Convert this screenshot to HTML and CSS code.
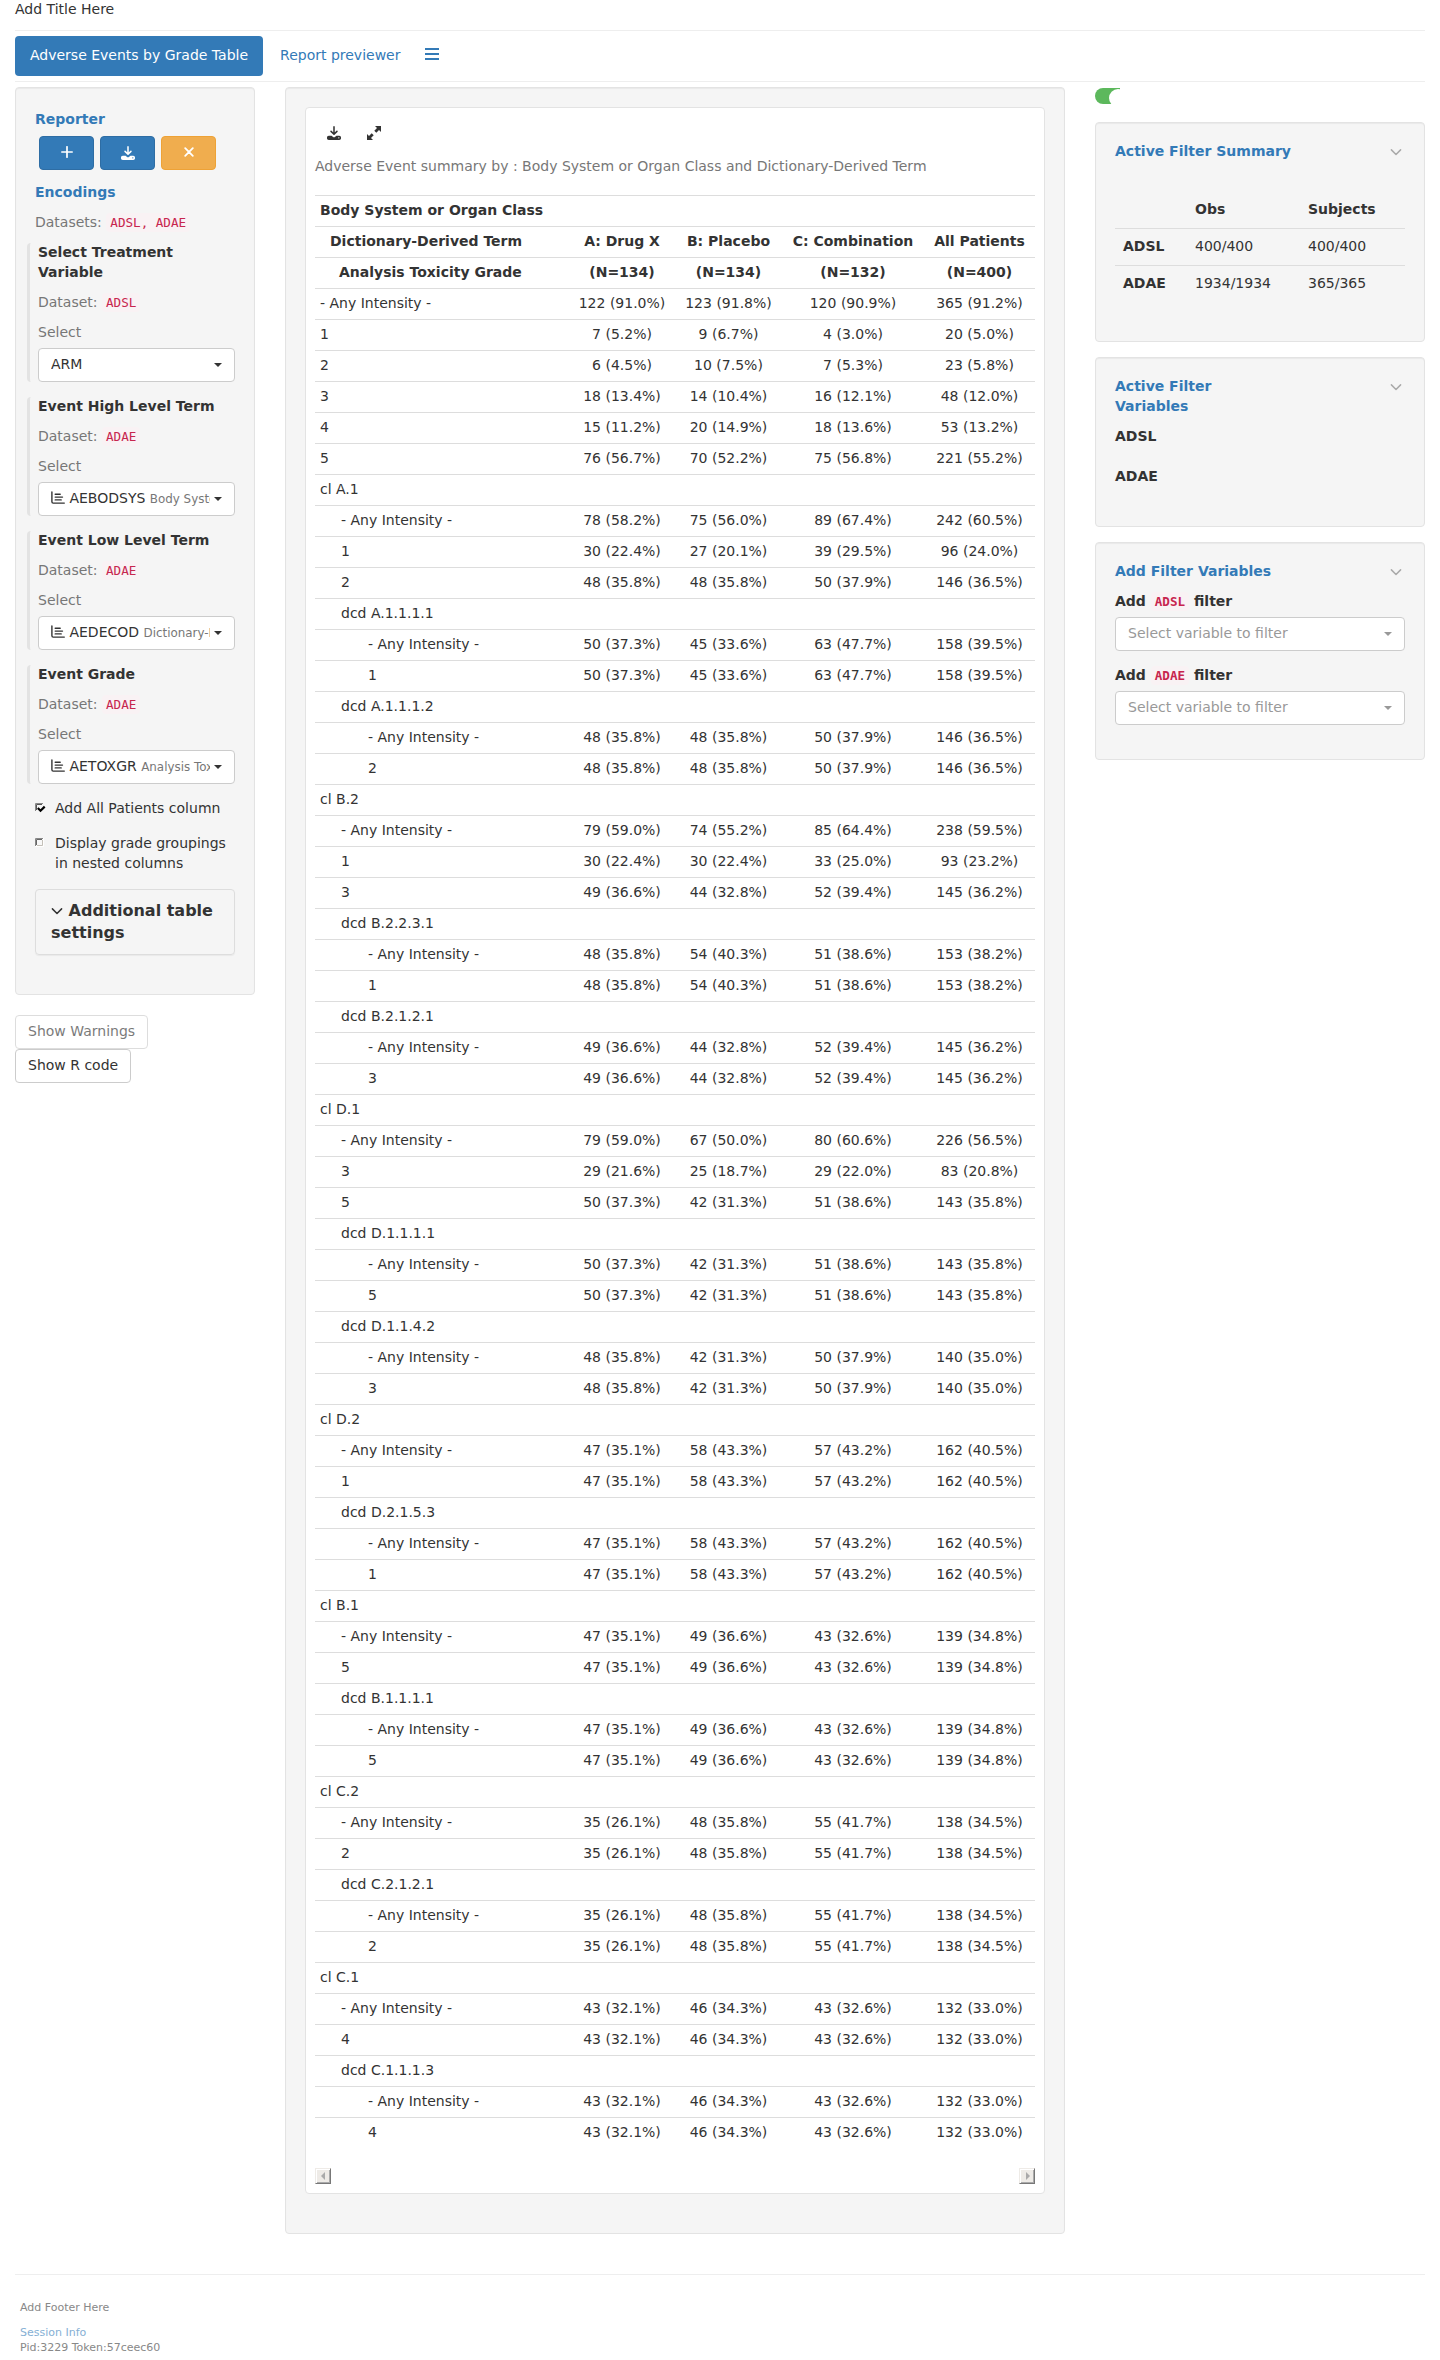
FILE: index.html
```
<!DOCTYPE html>
<html lang="en">
<head>
<meta charset="utf-8">
<title>Adverse Events by Grade Table</title>
<link rel="stylesheet" href="styles.css">
</head>
<body>
<svg class="sprite" aria-hidden="true">
  <symbol id="i-download" viewBox="0 0 512 512"><path d="M256 32v240M148 196l108 108 108-108" fill="none" stroke="currentColor" stroke-width="56" stroke-linecap="round" stroke-linejoin="round"/><path d="M64 352c-35 0-64 29-64 64v32c0 35 29 64 64 64h384c35 0 64-29 64-64v-32c0-35-29-64-64-64H346l-45 45c-25 25-65 25-90 0l-45-45H64zm368 104a24 24 0 1 1 0-48 24 24 0 0 1 0 48z" fill="currentColor"/></symbol>
  <symbol id="i-chevron" viewBox="0 0 14 14"><path d="M2.4 4.9L7 9.5l4.600-4.600" fill="none" stroke="currentColor" stroke-width="1.500" stroke-linecap="round" stroke-linejoin="round"/></symbol>
  <symbol id="i-chart" viewBox="0 0 14 14"><path d="M.9 1v9.800c0 1 .3 1.300 1.300 1.300H13.300M4.200 3.300h5M4.200 6.100h7.300M4.200 8.900h6" fill="none" stroke="currentColor" stroke-width="1.400" stroke-linecap="round"/></symbol>
</svg>
<header class="page-title">Add Title Here</header>
<nav class="tabs">
  <a class="tab active">Adverse Events by Grade Table</a>
  <a class="tab">Report previewer</a>
  <a class="tab burger"><svg width="14" height="12" viewBox="0 0 14 12"><path d="M0 1h14M0 6h14M0 11h14" stroke="currentColor" stroke-width="2"/></svg></a>
</nav>
<main class="layout">
  <aside class="left">
    <section class="well encodings">
      <div class="heading">Reporter</div>
      <div class="reporter">
        <button class="btn primary"><svg width="12" height="12" viewBox="0 0 12 12"><path d="M6 .8v10.400M.8 6h10.400" stroke="currentColor" stroke-width="1.700" stroke-linecap="round"/></svg></button>
        <button class="btn primary"><svg class="dl" width="14" height="14"><use href="#i-download"/></svg></button>
        <button class="btn warning"><svg width="10" height="10" viewBox="0 0 10 10"><path d="M1.200 1.200l7.600 7.600M8.800 1.200L1.200 8.800" stroke="currentColor" stroke-width="1.800" stroke-linecap="round"/></svg></button>
      </div>
      <div class="heading enc">Encodings</div>
      <div class="muted datasets">Datasets: <code>ADSL, ADAE</code></div>
      <div class="group">
        <b>Select Treatment Variable</b>
        <div class="muted">Dataset: <code>ADSL</code></div>
        <div class="muted">Select</div>
        <div class="picker"><span class="value">ARM</span><i class="caret"></i></div>
      </div>
      <div class="group">
        <b>Event High Level Term</b>
        <div class="muted">Dataset: <code>ADAE</code></div>
        <div class="muted">Select</div>
        <div class="picker"><span class="value"><svg width="14" height="14"><use href="#i-chart"/></svg> AEBODSYS <small>Body System or Organ Class</small></span><i class="caret"></i></div>
      </div>
      <div class="group">
        <b>Event Low Level Term</b>
        <div class="muted">Dataset: <code>ADAE</code></div>
        <div class="muted">Select</div>
        <div class="picker"><span class="value"><svg width="14" height="14"><use href="#i-chart"/></svg> AEDECOD <small>Dictionary-Derived Term</small></span><i class="caret"></i></div>
      </div>
      <div class="group">
        <b>Event Grade</b>
        <div class="muted">Dataset: <code>ADAE</code></div>
        <div class="muted">Select</div>
        <div class="picker"><span class="value"><svg width="14" height="14"><use href="#i-chart"/></svg> AETOXGR <small>Analysis Toxicity Grade</small></span><i class="caret"></i></div>
      </div>
      <div class="check"><svg width="11" height="11" viewBox="0 0 11 11"><path d="M.5 8V.5H8" fill="none" stroke="#888"/><path d="M1.500 7V1.500H7" fill="none" stroke="#555"/><path d="M2.800 5L5.500 7.700 9.700 3.600" fill="none" stroke="#000" stroke-width="2.200"/></svg><span>Add All Patients column</span></div>
      <div class="check"><svg width="11" height="11" viewBox="0 0 11 11"><path d="M1 1h7v7H1z" fill="#f8f8f8"/><path d="M.5 8V.5H8" fill="none" stroke="#888"/><path d="M1.500 7V1.500H7" fill="none" stroke="#666"/><path d="M7.500 2v5.500H2" fill="none" stroke="#c4c0b8"/><path d="M8.500 0v8.500H0" fill="none" stroke="#fff"/></svg><span>Display grade groupings in nested columns</span></div>
      <div class="settings"><svg width="12" height="14" viewBox="1 0 12 14"><use href="#i-chevron" width="14" height="14"/></svg> Additional table settings</div>
    </section>
    <div class="actions">
      <button class="btn plain faded">Show Warnings</button>
      <button class="btn plain">Show R code</button>
    </div>
  </aside>
  <section class="well center">
    <div class="card">
      <div class="tools">
        <svg width="14" height="14"><use href="#i-download"/></svg>
        <svg width="14" height="14" viewBox="0 0 14 14"><path d="M8 0h6v6l-2-2-2.700 2.700-2-2L10 2zM6 14H0V8l2 2 2.700-2.700 2 2L4 12z" fill="currentColor"/></svg>
      </div>
      <p class="caption">Adverse Event summary by : Body System or Organ Class and Dictionary-Derived Term</p>
      <table class="results">
        <colgroup><col class="c0"><col class="c1"><col class="c2"><col class="c3"><col class="c4"></colgroup>
        <thead>
          <tr><th>Body System or Organ Class</th><th></th><th></th><th></th><th></th></tr>
          <tr><th class="h1">Dictionary-Derived Term</th><th>A: Drug X</th><th>B: Placebo</th><th>C: Combination</th><th>All Patients</th></tr>
          <tr><th class="h2">Analysis Toxicity Grade</th><th>(N=134)</th><th>(N=134)</th><th>(N=132)</th><th>(N=400)</th></tr>
        </thead>
        <tbody id="rows"></tbody>
      </table>
      <div class="scrollbar"><span><svg width="5" height="8" viewBox="0 0 5 8"><path d="M4 0v8L0 4z"/></svg></span><span><svg width="5" height="8" viewBox="0 0 5 8"><path d="M1 0v8L5 4z"/></svg></span></div>
    </div>
  </section>
  <aside class="right">
    <div class="toggle"><i></i></div>
    <section class="well summary">
      <div class="heading">Active Filter Summary<svg width="14" height="14"><use href="#i-chevron"/></svg></div>
      <table>
        <tr><th></th><th>Obs</th><th>Subjects</th></tr>
        <tr><th>ADSL</th><td>400/400</td><td>400/400</td></tr>
        <tr><th>ADAE</th><td>1934/1934</td><td>365/365</td></tr>
      </table>
    </section>
    <section class="well active-vars">
      <div class="heading"><span>Active Filter Variables</span><svg width="14" height="14"><use href="#i-chevron"/></svg></div>
      <b>ADSL</b>
      <b>ADAE</b>
    </section>
    <section class="well add-vars">
      <div class="heading">Add Filter Variables<svg width="14" height="14"><use href="#i-chevron"/></svg></div>
      <label>Add <code>ADSL</code> filter</label>
      <div class="picker empty"><span class="value">Select variable to filter</span><i class="caret"></i></div>
      <label>Add <code>ADAE</code> filter</label>
      <div class="picker empty"><span class="value">Select variable to filter</span><i class="caret"></i></div>
    </section>
  </aside>
</main>
<footer>
  <p>Add Footer Here</p>
  <a>Session Info</a>
  <div>Pid:3229 Token:57ceec60</div>
</footer>
<script src="rows.js"></script>
</body>
</html>
```
FILE: styles.css
```
* { box-sizing: border-box; }
body { margin: 0; padding: 0 15px; background: #fff; color: #333; font: 14px/20px "DejaVu Sans", sans-serif; }
.sprite { position: absolute; width: 0; height: 0; }
svg { flex: none; }
code { font: 12.6px/1 "DejaVu Sans Mono", monospace; color: #c7254e; background: #f9f2f4; border-radius: 4px; padding: 2px 4px; }
.page-title { height: 31px; border-bottom: 1px solid #eee; line-height: 18px; }
.tabs { display: flex; gap: 2px; padding: 5px 0; height: 51px; border-bottom: 1px solid #eee; }
.tab { padding: 9px 15px 11px; height: 40px; border-radius: 4px; color: #337ab7; white-space: nowrap; }
.tab.active { background: #337ab7; color: #fff; }
.tab.burger { padding: 12px 8px; }
.burger svg { display: block; }
.layout { display: flex; gap: 30px; align-items: flex-start; padding-top: 5px; }
.left { width: 240px; flex: none; }
.center { width: 780px; flex: none; height: 2147px; }
.right { width: 330px; flex: none; }
.well { background: #f5f5f5; border: 1px solid #e3e3e3; border-radius: 4px; padding: 19px; box-shadow: inset 0 1px 1px rgba(0,0,0,.05); }
.heading { color: #337ab7; font-weight: bold; }
.muted { color: #777; }
.encodings { height: 908px; padding-top: 21px; }
.reporter { display: flex; gap: 6px; padding: 7px 4px 0; }
.btn { height: 34px; border-radius: 4px; border: 1px solid #2e6da4; color: #fff; font: inherit; padding: 6px 12px; display: flex; align-items: center; justify-content: center; }
.btn.primary { background: #337ab7; width: 55px; }
.btn.warning { background: #f0ad4e; border-color: #eea236; width: 55px; }
.btn.plain { background: #fff; color: #333; border-color: #ccc; padding: 5px 12px 7px; }
.btn.faded { opacity: .65; }
.btn svg { margin-top: -3px; }
.btn svg.dl { margin-top: -1px; }
.enc { margin-top: 12px; }
.datasets { margin-top: 10px; }
.group { display: flow-root; margin: 11px 0 15px -8px; border-left: 3px solid #e3e3e3; border-radius: 4px; padding-left: 8px; }
.group + .group { margin-top: 15px; }
.group b { display: block; margin-top: -1px; }
.group .muted { margin-top: 10px; }
.group .picker { margin-top: 6px; }
.picker { display: flex; align-items: center; height: 34px; padding: 0 12px; background: #fff; border: 1px solid #ccc; border-radius: 4px; }
.picker .value { flex: 1; overflow: hidden; white-space: nowrap; margin-top: -2px; margin-right: 4px; }
.picker .value svg { vertical-align: -2px; }
.picker small { color: #777; font-size: 11.9px; }
.caret { width: 0; height: 0; border: 4px solid transparent; border-top-color: #333; border-bottom: 0; }
.empty { color: #999; }
.empty .caret { border-top-color: #999; }
.check { display: flex; gap: 9px; margin-bottom: 15px; }
.check svg { margin-top: 4px; }
.check span { margin: -1px 0 1px; }
.settings { height: 66px; border: 1px solid #ddd; border-radius: 4px; padding: 10px 15px; font-weight: bold; font-size: 16px; line-height: 22px; box-shadow: 0 1px 1px rgba(0,0,0,.05); }
.settings svg { vertical-align: -2px; }
.actions { display: flex; flex-direction: column; align-items: flex-start; margin-top: 20px; }
.card { height: 2087px; background: #fff; border: 1px solid #e3e3e3; border-radius: 4px; padding: 18px 9px 9px; display: flex; flex-direction: column; }
.tools { display: flex; gap: 26px; padding: 0 12px; }
.tools svg { display: block; }
.caption { margin: 16px 0 19px; color: #777; white-space: nowrap; }
table { border-collapse: collapse; }
.results { width: 720px; table-layout: fixed; }
.c0 { width: 254px; } .c1 { width: 106px; } .c2 { width: 107px; } .c3 { width: 142px; } .c4 { width: 111px; }
.results th, .results td { height: 31px; padding: 4px 5px 6px; border-top: 1px solid #ddd; text-align: center; white-space: nowrap; }
.results th:first-child, .results td:first-child { text-align: left; }
.results .h1 { padding-left: 15px; }
.results .h2 { padding-left: 24px; }
.results .n1 { padding-left: 26px; }
.results .n2 { padding-left: 53px; }
.scrollbar { display: flex; justify-content: space-between; margin-top: auto; }
.scrollbar span { width: 16px; height: 16px; background: #eeebe7; border: 1px solid; border-color: #eeebe7 #777 #777 #eeebe7; box-shadow: inset 1px 1px #fff, inset -1px -1px #aaa; display: flex; align-items: center; justify-content: center; fill: #aaa; }
.toggle { width: 25px; height: 16px; margin: 1px 0 18px; border-radius: 8px 0 0 8px; background: #5cb85c; overflow: hidden; position: relative; }
.toggle i { position: absolute; left: 14px; top: .5px; width: 18px; height: 18px; border-radius: 9px; background: #fff; }
.right .heading { display: flex; justify-content: space-between; padding-right: 2px; margin-top: -1px; }
.right .heading span { width: 130px; }
.right .heading svg { color: #aaa; margin-top: 4px; }
.summary { height: 220px; }
.summary table { width: 290px; margin-top: 31px; border-collapse: separate; border-spacing: 0; }
.summary th, .summary td { padding: 7px 8px 9px; text-align: left; width: 113px; height: 36px; }
.summary th:first-child { width: 72px; }
.summary th:last-child, .summary td:last-child { width: 105px; }
.summary tr + tr > * { border-top: 1px solid #ddd; height: 37px; }
.active-vars { height: 170px; margin-top: 15px; }
.active-vars b { display: block; margin: 10px 0 20px; }
.add-vars { height: 218px; margin-top: 15px; }
.add-vars label { display: block; font-weight: bold; margin: 10px 0 6px; }
.add-vars label ~ label { margin-top: 14px; }
.add-vars code { font-weight: bold; }
footer { margin-top: 40px; border-top: 1px solid #eee; padding: 25px 5px 0; height: 86px; font-size: 11px; line-height: 15px; color: #888; }
footer p { margin: 0 0 10px; }
footer a { display: block; color: #85afd4; }
```
FILE: rows.js
```
// Each line: indent level | label | counts per arm (omitted on group rows)
const data = `0|- Any Intensity -|122 (91.0%)|123 (91.8%)|120 (90.9%)|365 (91.2%)
0|1|7 (5.2%)|9 (6.7%)|4 (3.0%)|20 (5.0%)
0|2|6 (4.5%)|10 (7.5%)|7 (5.3%)|23 (5.8%)
0|3|18 (13.4%)|14 (10.4%)|16 (12.1%)|48 (12.0%)
0|4|15 (11.2%)|20 (14.9%)|18 (13.6%)|53 (13.2%)
0|5|76 (56.7%)|70 (52.2%)|75 (56.8%)|221 (55.2%)
0|cl A.1
1|- Any Intensity -|78 (58.2%)|75 (56.0%)|89 (67.4%)|242 (60.5%)
1|1|30 (22.4%)|27 (20.1%)|39 (29.5%)|96 (24.0%)
1|2|48 (35.8%)|48 (35.8%)|50 (37.9%)|146 (36.5%)
1|dcd A.1.1.1.1
2|- Any Intensity -|50 (37.3%)|45 (33.6%)|63 (47.7%)|158 (39.5%)
2|1|50 (37.3%)|45 (33.6%)|63 (47.7%)|158 (39.5%)
1|dcd A.1.1.1.2
2|- Any Intensity -|48 (35.8%)|48 (35.8%)|50 (37.9%)|146 (36.5%)
2|2|48 (35.8%)|48 (35.8%)|50 (37.9%)|146 (36.5%)
0|cl B.2
1|- Any Intensity -|79 (59.0%)|74 (55.2%)|85 (64.4%)|238 (59.5%)
1|1|30 (22.4%)|30 (22.4%)|33 (25.0%)|93 (23.2%)
1|3|49 (36.6%)|44 (32.8%)|52 (39.4%)|145 (36.2%)
1|dcd B.2.2.3.1
2|- Any Intensity -|48 (35.8%)|54 (40.3%)|51 (38.6%)|153 (38.2%)
2|1|48 (35.8%)|54 (40.3%)|51 (38.6%)|153 (38.2%)
1|dcd B.2.1.2.1
2|- Any Intensity -|49 (36.6%)|44 (32.8%)|52 (39.4%)|145 (36.2%)
2|3|49 (36.6%)|44 (32.8%)|52 (39.4%)|145 (36.2%)
0|cl D.1
1|- Any Intensity -|79 (59.0%)|67 (50.0%)|80 (60.6%)|226 (56.5%)
1|3|29 (21.6%)|25 (18.7%)|29 (22.0%)|83 (20.8%)
1|5|50 (37.3%)|42 (31.3%)|51 (38.6%)|143 (35.8%)
1|dcd D.1.1.1.1
2|- Any Intensity -|50 (37.3%)|42 (31.3%)|51 (38.6%)|143 (35.8%)
2|5|50 (37.3%)|42 (31.3%)|51 (38.6%)|143 (35.8%)
1|dcd D.1.1.4.2
2|- Any Intensity -|48 (35.8%)|42 (31.3%)|50 (37.9%)|140 (35.0%)
2|3|48 (35.8%)|42 (31.3%)|50 (37.9%)|140 (35.0%)
0|cl D.2
1|- Any Intensity -|47 (35.1%)|58 (43.3%)|57 (43.2%)|162 (40.5%)
1|1|47 (35.1%)|58 (43.3%)|57 (43.2%)|162 (40.5%)
1|dcd D.2.1.5.3
2|- Any Intensity -|47 (35.1%)|58 (43.3%)|57 (43.2%)|162 (40.5%)
2|1|47 (35.1%)|58 (43.3%)|57 (43.2%)|162 (40.5%)
0|cl B.1
1|- Any Intensity -|47 (35.1%)|49 (36.6%)|43 (32.6%)|139 (34.8%)
1|5|47 (35.1%)|49 (36.6%)|43 (32.6%)|139 (34.8%)
1|dcd B.1.1.1.1
2|- Any Intensity -|47 (35.1%)|49 (36.6%)|43 (32.6%)|139 (34.8%)
2|5|47 (35.1%)|49 (36.6%)|43 (32.6%)|139 (34.8%)
0|cl C.2
1|- Any Intensity -|35 (26.1%)|48 (35.8%)|55 (41.7%)|138 (34.5%)
1|2|35 (26.1%)|48 (35.8%)|55 (41.7%)|138 (34.5%)
1|dcd C.2.1.2.1
2|- Any Intensity -|35 (26.1%)|48 (35.8%)|55 (41.7%)|138 (34.5%)
2|2|35 (26.1%)|48 (35.8%)|55 (41.7%)|138 (34.5%)
0|cl C.1
1|- Any Intensity -|43 (32.1%)|46 (34.3%)|43 (32.6%)|132 (33.0%)
1|4|43 (32.1%)|46 (34.3%)|43 (32.6%)|132 (33.0%)
1|dcd C.1.1.1.3
2|- Any Intensity -|43 (32.1%)|46 (34.3%)|43 (32.6%)|132 (33.0%)
2|4|43 (32.1%)|46 (34.3%)|43 (32.6%)|132 (33.0%)`;

const body = document.getElementById("rows");
for (const line of data.split("\n")) {
  const [level, label, ...counts] = line.split("|");
  const row = body.insertRow();
  const first = row.insertCell();
  first.className = "n" + level;
  first.textContent = label;
  for (let i = 0; i < 4; i++) row.insertCell().textContent = counts[i] || "";
}
```
